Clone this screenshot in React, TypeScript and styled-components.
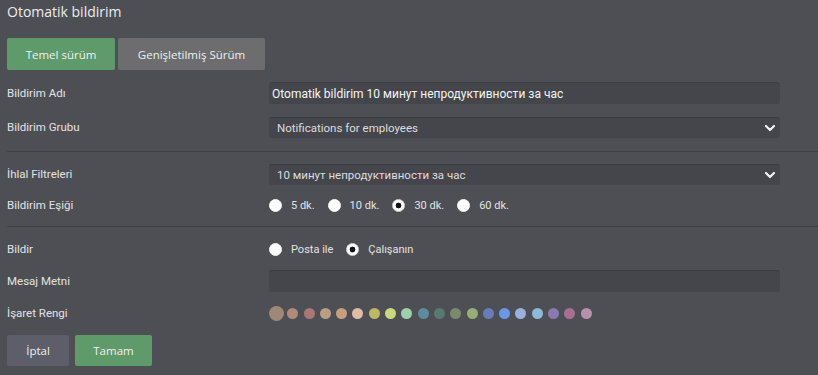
import * as React from "react";
import styled, { createGlobalStyle } from "styled-components";

const COLORS = {
  bg: "#4e4f55",
  field: "#45464b",
  fieldEdge: "#3c3d41",
  text: "#e4e4e6",
  green: "#5f9a6b",
  grey: "#6d6d6f",
  slate: "#5d5e6a",
  divider: "#414247",
};

const SWATCHES = [
  "#a08878", "#b08a7c", "#a87876", "#b89e82", "#c89e80", "#dfbca6", "#bcb866",
  "#ccd87c", "#9ed0b0", "#5c8c9c", "#5a7870", "#7a8a6e", "#98ac78", "#6a7cb8",
  "#6c96e6", "#9cb0dc", "#8cbad8", "#8a7ab0", "#a87090", "#b890ac",
];

const GlobalStyle = createGlobalStyle`
  html, body {
    margin: 0;
    background: ${COLORS.bg};
    font-family: Roboto, "Liberation Sans", sans-serif;
    color: ${COLORS.text};
  }
  * { box-sizing: border-box; }
`;

function Chevron() {
  return (
    <ArrowIcon width="12" height="8" viewBox="0 0 12 8">
      <path d="M2 2l4 4 4-4" fill="none" stroke="#f2f2f2" strokeWidth="2.2" strokeLinecap="round" strokeLinejoin="round" />
    </ArrowIcon>
  );
}

function Dropdown({ value }: { value: string }) {
  return (
    <SelectWrap>
      <Select defaultValue={value}>
        <option>{value}</option>
      </Select>
      <Chevron />
    </SelectWrap>
  );
}

function RadioGroup({ name, options, checked }: { name: string; options: string[]; checked: string }) {
  return (
    <Radios>
      {options.map((o) => (
        <RadioLabel key={o}>
          <Radio type="radio" name={name} defaultChecked={o === checked} />
          <span>{o}</span>
        </RadioLabel>
      ))}
    </Radios>
  );
}

export default function App() {
  return (
    <>
      <GlobalStyle />
      <Page>
        <Title>Otomatik bildirim</Title>
        <Tabs>
          <Button tone={COLORS.green} width={108} height={32}>Temel sürüm</Button>
          <Button tone={COLORS.grey} width={147} height={32}>Genişletilmiş Sürüm</Button>
        </Tabs>

        <Row top={7} height={32}>
          <Label>Bildirim Adı</Label>
          <TextInput defaultValue="Otomatik bildirim 10 минут непродуктивности за час" />
        </Row>
        <Row top={2} height={32}>
          <Label>Bildirim Grubu</Label>
          <Dropdown value="Notifications for employees" />
        </Row>

        <Divider top={8} />

        <Row top={6} height={32}>
          <Label>İhlal Filtreleri</Label>
          <Dropdown value="10 минут непродуктивности за час" />
        </Row>
        <Row top={0} height={30}>
          <Label>Bildirim Eşiği</Label>
          <RadioGroup name="esik" options={["5 dk.", "10 dk.", "30 dk.", "60 dk."]} checked="30 dk." />
        </Row>

        <Divider top={6} />

        <Row top={7} height={30}>
          <Label>Bildir</Label>
          <RadioGroup name="bildir" options={["Posta ile", "Çalışanın"]} checked="Çalışanın" />
        </Row>
        <Row top={1} height={32}>
          <Label>Mesaj Metni</Label>
          <TextInput defaultValue="" />
        </Row>
        <Row top={0} height={32}>
          <Label>İşaret Rengi</Label>
          <Swatches>
            {SWATCHES.map((c, i) => (
              <Swatch key={c} color={c} big={i === 0} />
            ))}
          </Swatches>
        </Row>

        <Actions>
          <Button tone={COLORS.slate} width={62} height={31}>İptal</Button>
          <Button tone={COLORS.green} width={77} height={31}>Tamam</Button>
        </Actions>
      </Page>
    </>
  );
}

const Page = styled.div`
  width: 818px;
  height: 375px;
  padding-left: 7px;
  display: flex;
  flex-direction: column;
  overflow: hidden;
`;

const Title = styled.div`
  height: 24px;
  line-height: 24px;
  font-family: "Open Sans", Roboto, sans-serif;
  font-size: 14px;
  color: #ececee;
`;

const Tabs = styled.div`
  margin-top: 14px;
  display: flex;
  gap: 3px;
`;

const Actions = styled.div`
  margin-top: 6px;
  display: flex;
  gap: 6px;
`;

const Button = styled.button<{ tone: string; width: number; height: number }>`
  width: ${(p) => p.width}px;
  height: ${(p) => p.height}px;
  border: none;
  border-radius: 2px;
  background: ${(p) => p.tone};
  color: #f0f0f0;
  font-family: "Open Sans", Roboto, sans-serif;
  font-size: 11.5px;
  padding: 0;
  cursor: pointer;
`;

const Row = styled.div<{ top: number; height: number }>`
  margin-top: ${(p) => p.top}px;
  height: ${(p) => p.height}px;
  display: grid;
  grid-template-columns: 262px 511px;
  align-items: center;
`;

const Label = styled.div`
  font-size: 11.5px;
  color: #e2e2e4;
`;

const TextInput = styled.input`
  height: 22px;
  width: 100%;
  background: ${COLORS.field};
  border: none;
  border-top: 1px solid ${COLORS.fieldEdge};
  border-radius: 3px;
  color: #f4f4f4;
  font-family: Roboto, "Liberation Sans", sans-serif;
  font-size: 12px;
  padding: 0 3px;
  outline: none;
`;

const SelectWrap = styled.div`
  position: relative;
  width: 100%;
  height: 21px;
`;

const Select = styled.select`
  appearance: none;
  width: 100%;
  height: 100%;
  background: ${COLORS.field};
  border: none;
  border-top: 1px solid ${COLORS.fieldEdge};
  border-radius: 3px;
  color: #dcdcde;
  font-family: Roboto, "Liberation Sans", sans-serif;
  font-size: 11.5px;
  padding: 0 0 0 8px;
  outline: none;
`;

const ArrowIcon = styled.svg`
  position: absolute;
  right: 4px;
  top: 7px;
  pointer-events: none;
`;

const Radios = styled.div`
  display: flex;
  align-items: center;
  gap: 13px;
`;

const RadioLabel = styled.label`
  display: flex;
  align-items: center;
  gap: 9px;
  font-size: 11px;
  color: #e2e2e4;
`;

const Radio = styled.input`
  appearance: none;
  margin: 0;
  width: 13px;
  height: 13px;
  border-radius: 50%;
  background: #ffffff;
  border: 1px solid #f4f4f4;

  &:checked {
    background: radial-gradient(circle, #111 0 2.6px, #fff 3.2px);
    border-color: #d8d8dc;
  }
`;

const Swatches = styled.div`
  display: flex;
  align-items: center;
  gap: 5.3px;
`;

const Swatch = styled.span<{ color: string; big: boolean }>`
  width: ${(p) => (p.big ? 15 : 11)}px;
  height: ${(p) => (p.big ? 15 : 11)}px;
  border-radius: 50%;
  background: ${(p) => p.color};
  ${(p) => (p.big ? "margin-right: -2px;" : "")}
`;

const Divider = styled.hr<{ top: number }>`
  margin: ${(p) => p.top}px 0 0;
  border: none;
  height: 1px;
  background: ${COLORS.divider};
  width: 100%;
`;
